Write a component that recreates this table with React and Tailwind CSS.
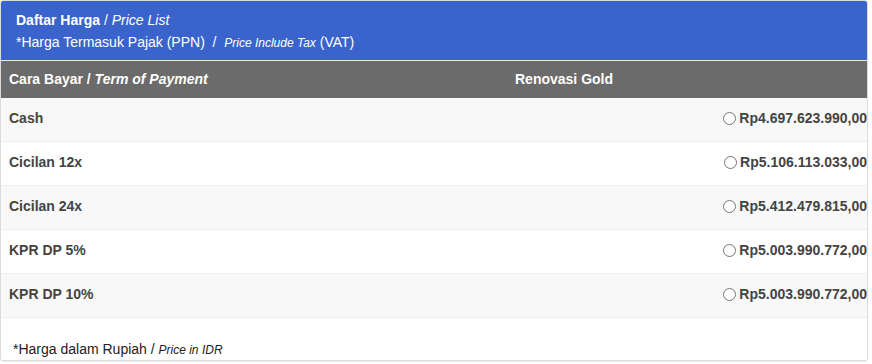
export default function App() {
  const rows = [
    { label: "Cash", price: "Rp4.697.623.990,00" },
    { label: "Cicilan 12x", price: "Rp5.106.113.033,00" },
    { label: "Cicilan 24x", price: "Rp5.412.479.815,00" },
    { label: "KPR DP 5%", price: "Rp5.003.990.772,00" },
    { label: "KPR DP 10%", price: "Rp5.003.990.772,00" },
  ];

  return (
    <div className="w-[872px] h-[364px] bg-white font-['Liberation_Sans',Arial,sans-serif] text-[14px]">
      <div className="w-[868px] h-[361px] border border-[#dcdcdc] rounded-[3px] overflow-hidden flex flex-col shadow-[0_1px_1px_rgba(0,0,0,0.08)]">
        {/* Blue header */}
        <div className="h-[60px] bg-[#3a64cc] text-white px-[15px] pt-[10px] leading-[19px] border-b border-[#e6e6e6]">
          <div>
            <span className="font-bold">Daftar Harga</span> / <i>Price List</i>
          </div>
          <div className="mt-[3px]">
            *Harga Termasuk Pajak (PPN)&nbsp; /&nbsp; <i className="text-[12px]">Price Include Tax</i> (VAT)
          </div>
        </div>

        {/* Table header */}
        <div className="h-[37px] bg-[#6b6b6b] text-white font-bold flex items-center">
          <div className="w-[507px] pl-[8px]">
            Cara Bayar / <i>Term of Payment</i>
          </div>
          <div className="pl-[7px]">Renovasi Gold</div>
        </div>

        {/* Rows */}
        {rows.map((r, i) => (
          <div
            key={r.label}
            className={
              "h-[44px] flex items-start pt-[10px] text-[#444] font-bold border-b border-[#eeeeee] " +
              (i % 2 === 0 ? "bg-[#f8f8f8]" : "bg-white")
            }
          >
            <div className="w-[507px] pl-[8px]">{r.label}</div>
            <div className="flex-1 flex justify-end items-center">
              <span className="w-[13px] h-[13px] rounded-full border border-[#767676] bg-white mr-[3px]" />
              <span>{r.price}</span>
            </div>
          </div>
        ))}

        {/* Footer note */}
        <div className="flex-1 flex items-end pl-[12px] pb-[1px] text-[#222] leading-[18px]">
          <span>
            *Harga dalam Rupiah / <i className="text-[12px]">Price in IDR</i>
          </span>
        </div>
      </div>
    </div>
  );
}
